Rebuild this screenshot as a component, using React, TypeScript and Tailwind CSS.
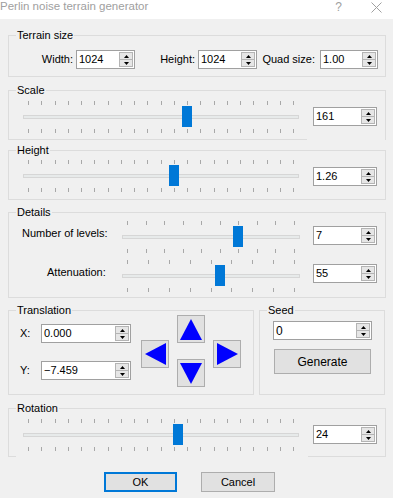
import React from 'react';

function SpinButton() {
  return (
    <div className="mr-[1px] flex h-[15px] w-[14px] flex-col border border-[#b4b4b4] bg-[#e6e6e6]">
      <div className="flex flex-1 items-center justify-center border-b border-[#b4b4b4]">
        <svg width="5" height="3" viewBox="0 0 5 3"><polygon points="2.5,0 5,3 0,3" fill="#000" /></svg>
      </div>
      <div className="flex flex-1 items-center justify-center">
        <svg width="5" height="3" viewBox="0 0 5 3"><polygon points="0,0 5,0 2.5,3" fill="#000" /></svg>
      </div>
    </div>
  );
}

function Spin({ value, className }: { value: string; className: string }) {
  return (
    <div className={`flex h-[19px] shrink-0 items-center border border-[#a0a0a0] bg-white ${className}`}>
      <span className="flex-1 pl-[2px] text-[11px] leading-none text-black">{value}</span>
      <SpinButton />
    </div>
  );
}

function Slider({ width, ticks, thumb }: { width: number; ticks: number; thumb: number }) {
  const first = 5;
  const last = width - 6;
  const xs = Array.from({ length: ticks }, (_, i) => Math.round(first + (i * (last - first)) / (ticks - 1)));
  return (
    <div className="relative h-[32px] shrink-0" style={{ width }}>
      {xs.map((x) => (
        <div key={'t' + x} className="absolute top-0 h-[4px] w-px bg-[#a8a8a8]" style={{ left: x }} />
      ))}
      <div className="absolute left-0 right-0 top-[14px] h-[4px] border border-[#d6d6d6] bg-[#e7eaea]" />
      <div className="absolute top-[5px] h-[21px] w-[10px] bg-[#0078d7]" style={{ left: thumb }} />
      {xs.map((x) => (
        <div key={'b' + x} className="absolute top-[28px] h-[4px] w-px bg-[#a8a8a8]" style={{ left: x }} />
      ))}
    </div>
  );
}

function Group({ label, className, children }: { label: string; className: string; children: React.ReactNode }) {
  return (
    <div className={`relative border border-[#dcdcdc] ${className}`}>
      <span className="absolute -top-[8px] left-[7px] bg-[#f0f0f0] px-[1px] text-[11px] leading-[14px] text-black">
        {label}
      </span>
      {children}
    </div>
  );
}

function Arrow({ dir }: { dir: 'up' | 'down' | 'left' | 'right' }) {
  const pts = {
    up: '11,0 22,21 0,21',
    down: '0,0 22,0 11,21',
    left: '0,11 21,0 21,22',
    right: '0,0 21,11 0,22',
  }[dir];
  const vertical = dir === 'up' || dir === 'down';
  return (
    <div className="flex h-[28px] w-[28px] items-center justify-center border border-[#adadad] bg-[#e1e1e1]">
      <svg width={vertical ? 22 : 21} height={vertical ? 21 : 22} viewBox={vertical ? '0 0 22 21' : '0 0 21 22'}>
        <polygon points={pts} fill="#0000ff" />
      </svg>
    </div>
  );
}

export default function App() {
  return (
    <div className="h-[498px] w-[393px] overflow-hidden bg-[#f0f0f0] font-['Liberation_Sans',Arial,sans-serif] text-black">
      {/* title bar */}
      <div className="flex h-[19px] items-center bg-white">
        <span className="-mt-[6px] flex-1 text-[11.5px] leading-none text-[#a0a0a0]">Perlin noise terrain generator</span>
        <span className="-mt-[5px] mr-[29px] text-[12px] leading-none text-[#a0a0a0]">?</span>
        <svg className="-mt-[5px] mr-[11px]" width="11" height="11" viewBox="0 0 11 11">
          <path d="M0.5 0.5 L10.5 10.5 M10.5 0.5 L0.5 10.5" stroke="#a0a0a0" strokeWidth="1" />
        </svg>
      </div>

      <div className="flex flex-col pl-[8px] pr-[7px]">
        {/* Terrain size */}
        <Group label="Terrain size" className="mt-[16px] h-[42px]">
          <div className="mt-[14px] flex items-center text-[11px]">
            <span className="w-[67px] pr-[3px] text-right">Width:</span>
            <Spin value="1024" className="w-[59px]" />
            <span className="w-[63px] pr-[3px] text-right">Height:</span>
            <Spin value="1024" className="w-[59px]" />
            <span className="w-[63px] pr-[5px] text-right">Quad size:</span>
            <Spin value="1.00" className="w-[58px]" />
          </div>
        </Group>

        {/* Scale */}
        <Group label="Scale" className="mt-[13px] h-[50px]">
          <div className="flex items-start pt-[10px]">
            <div className="ml-[14px]">
              <Slider width={276} ticks={21} thumb={159} />
            </div>
            <Spin value="161" className="ml-[14px] mt-[6px] w-[64px]" />
          </div>
          <div className="absolute -bottom-px left-[298px] right-0 h-px bg-[#f0f0f0]" />
        </Group>

        {/* Height */}
        <Group label="Height" className="mt-[10px] h-[50px]">
          <div className="flex items-start pt-[9px]">
            <div className="ml-[14px]">
              <Slider width={276} ticks={21} thumb={146} />
            </div>
            <Spin value="1.26" className="ml-[14px] mt-[7px] w-[64px]" />
          </div>
        </Group>

        {/* Details */}
        <Group label="Details" className="mt-[12px] h-[86px]">
          <div className="flex items-start pt-[8px]">
            <span className="mt-[5px] w-[113px] pl-[13px] text-[11px] leading-[14px]">Number of levels:</span>
            <Slider width={178} ticks={10} thumb={111} />
            <Spin value="7" className="ml-[13px] mt-[5px] w-[64px]" />
          </div>
          <div className="mt-[7px] flex items-start">
            <span className="mt-[5px] w-[113px] pl-[38px] text-[11px] leading-[14px]">Attenuation:</span>
            <Slider width={178} ticks={9} thumb={93} />
            <Spin value="55" className="ml-[13px] mt-[4px] w-[64px]" />
          </div>
        </Group>

        {/* Translation + Seed */}
        <div className="mt-[12px] flex">
          <Group label="Translation" className="h-[85px] w-[246px]">
            <div className="flex">
              <div className="flex flex-col pl-[11px] pt-[13px]">
                <div className="flex items-center">
                  <span className="w-[21px] text-[11px]">X:</span>
                  <Spin value="0.000" className="w-[90px]" />
                </div>
                <div className="mt-[18px] flex items-center">
                  <span className="w-[21px] text-[11px]">Y:</span>
                  <Spin value="−7.459" className="w-[90px]" />
                </div>
              </div>
              <div className="ml-[10px] flex items-center gap-[8px] pt-[4px]">
                <div className="mt-[5px]">
                  <Arrow dir="left" />
                </div>
                <div className="flex flex-col gap-[16px]">
                  <Arrow dir="up" />
                  <Arrow dir="down" />
                </div>
                <div className="mt-[5px]">
                  <Arrow dir="right" />
                </div>
              </div>
            </div>
          </Group>
          <Group label="Seed" className="ml-[5px] h-[85px] w-[126px]">
            <div className="flex flex-col pt-[10px]">
              <div className="ml-[13px] flex h-[19px] w-[99px] items-center border border-[#a0a0a0] bg-white">
                <span className="flex-1 pl-[2px] text-[12px] leading-none">0</span>
                <SpinButton />
              </div>
              <button className="ml-[14px] mt-[9px] h-[25px] w-[97px] border border-[#adadad] bg-[#e1e1e1] text-[12px]">
                Generate
              </button>
            </div>
          </Group>
        </div>

        {/* Rotation */}
        <Group label="Rotation" className="mt-[13px] h-[49px]">
          <div className="flex items-start pt-[10px]">
            <div className="ml-[14px]">
              <Slider width={276} ticks={21} thumb={150} />
            </div>
            <Spin value="24" className="ml-[14px] mt-[6px] w-[64px]" />
          </div>
          <div className="absolute -bottom-px left-[7px] h-px w-[292px] bg-[#f0f0f0]" />
        </Group>
      </div>

      {/* OK / Cancel */}
      <div className="ml-[104px] mt-[15px] flex gap-[24px]">
        <button className="h-[20px] w-[73px] border-2 border-[#0078d7] bg-[#e1e1e1] text-[11px] leading-none">OK</button>
        <button className="h-[20px] w-[74px] border border-[#adadad] bg-[#e1e1e1] text-[11px] leading-none">Cancel</button>
      </div>
    </div>
  );
}
